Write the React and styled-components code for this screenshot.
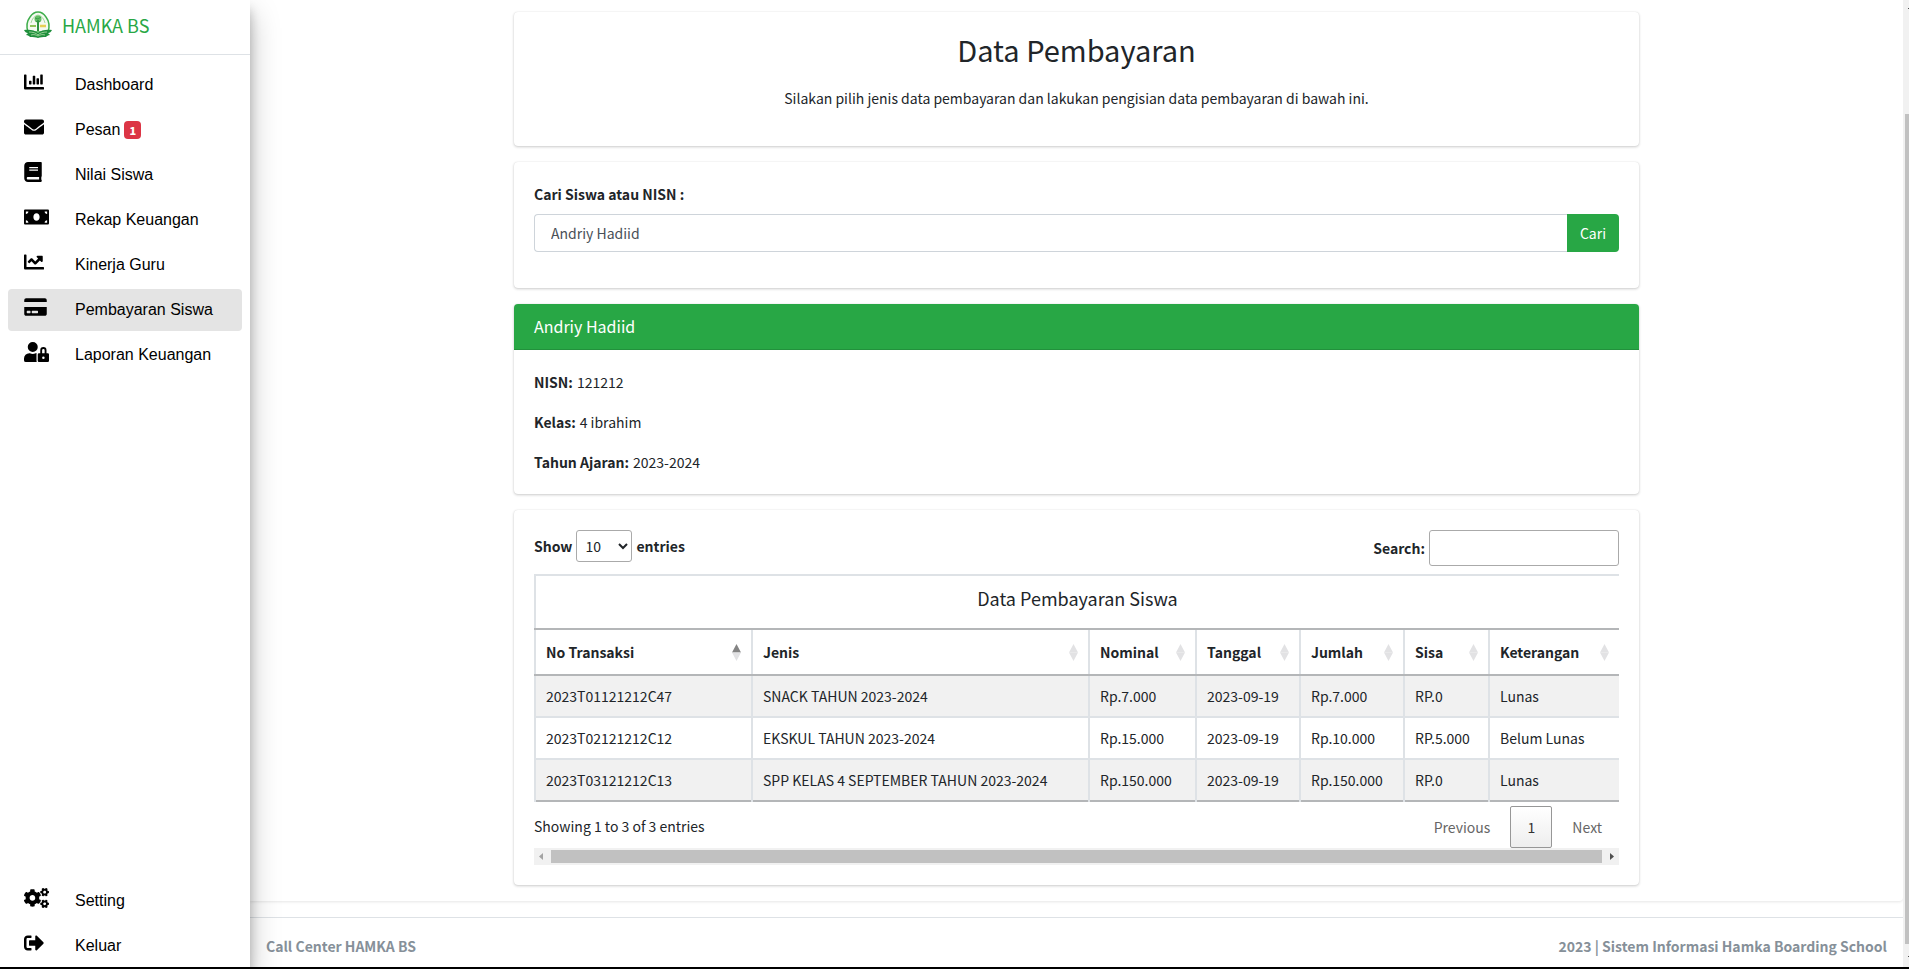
import styled, { createGlobalStyle } from "styled-components";
import {
  FaBook,
  FaChartBar,
  FaChartLine,
  FaCogs,
  FaCreditCard,
  FaEnvelope,
  FaMoneyBill,
  FaSignOutAlt,
  FaUserLock,
} from "react-icons/fa";

const GlobalStyle = createGlobalStyle`
  *,
  *::before,
  *::after {
    box-sizing: border-box;
  }

  :root {
    --font-ui: "Noto Sans CJK JP", "Noto Sans CJK SC", sans-serif;
    --color-green: #28a745;
    --color-text: #212529;
    --color-border: #dee2e6;
    --shadow-card: 0 0 1px rgba(0, 0, 0, 0.13), 0 1px 3px rgba(0, 0, 0, 0.2);
  }

  body {
    margin: 0;
    background-color: #fff;
    color: var(--color-text);
    font-family: var(--font-ui);
    font-size: 14px;
    line-height: 24px;
  }

  button,
  input,
  select {
    font: inherit;
    color: inherit;
  }
`;

const Frame = styled.div`
  display: flex;
  height: 100vh;
  padding: 0 6px 2px 0;
  background-color: #fff;
`;

const Window = styled.div`
  display: flex;
  flex: 1;
  min-width: 0;
  border-bottom: 2px solid #000;
`;

const Sidebar = styled.aside`
  position: relative;
  z-index: 1;
  display: flex;
  flex-direction: column;
  flex: 0 0 250px;
  background-color: #fff;
  box-shadow: 0 14px 28px rgba(0, 0, 0, 0.25), 0 10px 10px rgba(0, 0, 0, 0.22);
  clip-path: inset(0 -60px 0 0);
`;

const Brand = styled.a`
  display: flex;
  align-items: center;
  gap: 10px;
  height: 55px;
  padding: 0 24px 4px;
  border-bottom: 1px solid var(--color-border);
  color: var(--color-green);
  font-size: 18px;
  text-decoration: none;
`;

const NavList = styled.ul`
  display: flex;
  flex-direction: column;
  gap: 3px;
  margin: 0;
  padding: 9px 8px 0;
  list-style: none;
`;

const NavSpacer = styled.div`
  flex: 1;
`;

const NavLink = styled.a`
  display: flex;
  align-items: center;
  height: 42px;
  padding: 0 16px 1px;
  border-radius: 4px;
  background-color: ${(props) => (props.$active ? "#e4e4e4" : "transparent")};
  color: #000;
  font-family: "Liberation Sans", Arial, sans-serif;
  font-size: 16px;
  text-decoration: none;
`;

const NavIcon = styled.span`
  display: flex;
  width: 51px;
  padding-bottom: 6px;

  & svg {
    width: ${(props) => props.$width};
    height: 20px;
  }
`;

const Badge = styled.span`
  margin-left: 4px;
  padding: 0 5px;
  border-radius: 4px;
  background-color: #dc3545;
  color: #fff;
  font-family: var(--font-ui);
  font-size: 11px;
  font-weight: 900;
  line-height: 18px;
`;

const Page = styled.div`
  display: flex;
  flex-direction: column;
  flex: 1;
  min-width: 0;
`;

const Content = styled.main`
  flex: 1;
  padding: 12px 16px 16px;
  border-bottom-right-radius: 4px;
  box-shadow: 0 1px 3px rgba(0, 0, 0, 0.1);
`;

const Column = styled.div`
  display: flex;
  flex-direction: column;
  gap: 16px;
  max-width: 1125px;
  margin: 0 auto;
`;

const Card = styled.section`
  border-radius: 4px;
  background-color: #fff;
  box-shadow: var(--shadow-card);
`;

const CardBody = styled.div`
  padding: 20px;
`;

const IntroBody = styled(CardBody)`
  min-height: 134px;
  text-align: center;
`;

const PageTitle = styled.h2`
  margin: 0 0 20px;
  font-size: 29px;
  font-weight: 400;
  line-height: 34px;
`;

const Text = styled.p`
  margin: 0;
`;

const SearchForm = styled.form`
  padding-bottom: 16px;
`;

const SearchLabel = styled.label`
  display: block;
  margin-bottom: 8px;
  font-weight: 700;
`;

const InputGroup = styled.div`
  display: flex;
`;

const SearchInput = styled.input`
  flex: 1;
  height: 38px;
  padding: 6px 16px;
  border: 1px solid #ced4da;
  border-right: none;
  border-radius: 4px 0 0 4px;
  color: #495057;
`;

const SearchButton = styled.button`
  height: 38px;
  padding: 6px 13px;
  border: none;
  border-radius: 0 4px 4px 0;
  background-color: var(--color-green);
  color: #fff;
`;

const CardHeader = styled.h3`
  margin: 0;
  padding: 10px 20px 11px;
  border-bottom: 1px solid rgba(0, 0, 0, 0.13);
  border-radius: 4px 4px 0 0;
  background-color: var(--color-green);
  color: #fff;
  font-size: 16px;
  font-weight: 400;
`;

const Details = styled.dl`
  display: flex;
  flex-direction: column;
  gap: 16px;
  margin: 0;
`;

const DetailRow = styled.div`
  display: flex;
  gap: 4px;

  & dt {
    font-weight: 700;
  }

  & dd {
    margin: 0;
  }
`;

const TableTools = styled.div`
  display: flex;
  justify-content: space-between;
  padding-bottom: 8px;
`;

const ToolLabel = styled.label`
  display: flex;
  align-items: center;
  gap: 4px;
  height: 36px;
  font-weight: 700;
`;

const LengthLabel = styled(ToolLabel)`
  height: 32px;
`;

const LengthSelect = styled.select`
  width: 56px;
  height: 32px;
  padding: 4px;
  border: 1px solid #aaa;
  border-radius: 3px;
  background-color: transparent;
  font-weight: 400;
`;

const FilterInput = styled.input`
  width: 190px;
  height: 36px;
  padding: 5px;
  border: 1px solid #aaa;
  border-radius: 3px;
`;

const TableClip = styled.div`
  overflow: hidden;
`;

const DataTable = styled.table`
  width: calc(100% + 2px);
  border: 2px solid var(--color-border);
  border-bottom: 2px solid #b4b6b8;
  border-collapse: collapse;
  white-space: nowrap;
`;

const TableTitle = styled.th`
  height: 54px;
  padding: 0 0 8px;
  font-size: 18px;
  font-weight: 400;
`;

const HeadCell = styled.th`
  width: ${(props) => props.$width};
  height: 46px;
  padding: 0 10px;
  border-top: 2px solid #b4b6b8;
  border-bottom: 2px solid #b4b6b8;
  border-left: 2px solid var(--color-border);
  text-align: left;
`;

const HeadContent = styled.div`
  display: flex;
  align-items: center;
  justify-content: space-between;
`;

const BodyRow = styled.tr`
  height: 42px;

  &:nth-child(odd) {
    background-color: #f1f1f1;
  }
`;

const Cell = styled.td`
  padding: 0 10px;
  border-top: 2px solid var(--color-border);
  border-left: 2px solid var(--color-border);
`;

const TableFooter = styled.div`
  display: flex;
  align-items: flex-start;
  justify-content: space-between;
  padding-top: 4px;
`;

const Info = styled.p`
  margin: 0;
  padding-top: 8px;
`;

const Pagination = styled.nav`
  display: flex;
  gap: 3px;
`;

const PageButton = styled.button`
  min-width: 42px;
  height: 42px;
  padding: 0 16px;
  border: 1px solid ${(props) => (props.$current ? "#979797" : "transparent")};
  border-radius: 2px;
  background: ${(props) =>
    props.$current ? "linear-gradient(#fff, #eee)" : "transparent"};
  color: ${(props) => (props.$current ? "#333" : "#666")};
`;

const ScrollTrack = styled.div`
  display: flex;
  align-items: center;
  height: 17px;
  background-color: #f1f1f1;
`;

const ScrollArrow = styled.svg`
  flex: none;
  width: 17px;
  height: 17px;
`;

const ScrollThumb = styled.div`
  flex: 1;
  height: 13px;
  background-color: #c1c1c1;
`;

const Footer = styled.footer`
  display: flex;
  justify-content: space-between;
  margin-top: 16px;
  padding: 16px 16px 9px;
  border-top: 1px solid var(--color-border);
  color: #869099;
  font-weight: 700;
`;

const PageScroll = styled.div`
  display: flex;
  flex-direction: column;
  flex: 0 0 6px;
  padding-left: 2px;
  background-color: #f1f1f1;
`;

const PageScrollArrow = styled.svg`
  flex: none;
  width: 4px;
  height: 17px;
`;

const PageScrollThumb = styled.div`
  flex: 1;
  margin: 97px 0 6px;
  background-color: #c1c1c1;
`;

const menu = [
  { label: "Dashboard", icon: FaChartBar, width: "20px" },
  { label: "Pesan", icon: FaEnvelope, width: "20px", badge: 1 },
  { label: "Nilai Siswa", icon: FaBook, width: "18px" },
  { label: "Rekap Keuangan", icon: FaMoneyBill, width: "25px" },
  { label: "Kinerja Guru", icon: FaChartLine, width: "20px" },
  { label: "Pembayaran Siswa", icon: FaCreditCard, width: "23px", active: true },
  { label: "Laporan Keuangan", icon: FaUserLock, width: "25px" },
];

const bottomMenu = [
  { label: "Setting", icon: FaCogs, width: "25px" },
  { label: "Keluar", icon: FaSignOutAlt, width: "20px" },
];

const columns = [
  { label: "No Transaksi", width: "217px", sort: "asc" },
  { label: "Jenis" },
  { label: "Nominal", width: "107px" },
  { label: "Tanggal", width: "104px" },
  { label: "Jumlah", width: "104px" },
  { label: "Sisa", width: "85px" },
  { label: "Keterangan", width: "131px" },
];

const payments = [
  ["2023T01121212C47", "SNACK TAHUN 2023-2024", "Rp.7.000", "2023-09-19", "Rp.7.000", "RP.0", "Lunas"],
  ["2023T02121212C12", "EKSKUL TAHUN 2023-2024", "Rp.15.000", "2023-09-19", "Rp.10.000", "RP.5.000", "Belum Lunas"],
  ["2023T03121212C13", "SPP KELAS 4 SEPTEMBER TAHUN 2023-2024", "Rp.150.000", "2023-09-19", "Rp.150.000", "RP.0", "Lunas"],
];

function Logo() {
  return (
    <svg width="28" height="30" viewBox="0 0 28 30" aria-hidden="true">
      <path
        d="M4 22C2 16 3 11 6 7c2-3 5-5 8-5s6 2 8 5c3 4 4 9 2 15z"
        fill="#f4faf0"
        stroke="#3fae4c"
        strokeWidth="1.500"
      />
      <path d="M7 13c1-4 3-7 7-8M21 13c-1-4-3-7-7-8" fill="none" stroke="#a6d8a0" />
      <circle cx="14" cy="9" r="3.500" fill="#62bd63" />
      <path d="M11 8l3 1 3-2M12 12l2-2 2 2" fill="none" stroke="#2f9440" strokeWidth="0.800" />
      <path d="M14 11v10" stroke="#2f9440" strokeWidth="2" />
      <path d="M6 16h6" stroke="#8fc458" strokeWidth="2" />
      <path d="M16 16h6" stroke="#e6cf55" strokeWidth="2.500" />
      <path
        d="M0 20c5-1 11 0 14 3 3-3 9-4 14-3-1 2-2 3-4 3l2 2c-2 0-3 1-4 2-3 0-6 0-8 1-2-1-5-1-8-1-1-1-2-2-4-2l2-2c-2 0-3-1-4-3z"
        fill="#1f8f3c"
      />
      <path d="M5 22c4 0 7 1 9 3 2-2 5-3 9-3" fill="none" stroke="#b5dfa9" strokeWidth="0.800" />
      <path d="M7 25c3-1 5 0 7 1 2-1 4-2 7-1" fill="none" stroke="#b5dfa9" strokeWidth="0.800" />
    </svg>
  );
}

function SortIcon({ sort }) {
  return (
    <svg width="9" height="17" viewBox="0 0 9 17" aria-hidden="true">
      <path d="M4.500 0L9 8.500H0z" fill={sort === "asc" ? "#848484" : "#e2e2e4"} />
      <path d="M4.500 17L9 8.500H0z" fill="#e2e2e4" />
    </svg>
  );
}

function NavItem({ item }) {
  const Icon = item.icon;
  return (
    <li>
      <NavLink href="#" $active={item.active}>
        <NavIcon $width={item.width}>
          <Icon />
        </NavIcon>
        {item.label}
        {item.badge && <Badge>{item.badge}</Badge>}
      </NavLink>
    </li>
  );
}

function PaymentTable() {
  return (
    <TableClip>
      <DataTable>
        <thead>
          <tr>
            <TableTitle colSpan={7}>Data Pembayaran Siswa</TableTitle>
          </tr>
          <tr>
            {columns.map((column) => (
              <HeadCell key={column.label} $width={column.width}>
                <HeadContent>
                  {column.label}
                  <SortIcon sort={column.sort} />
                </HeadContent>
              </HeadCell>
            ))}
          </tr>
        </thead>
        <tbody>
          {payments.map((payment) => (
            <BodyRow key={payment[0]}>
              {payment.map((value, index) => (
                <Cell key={columns[index].label}>{value}</Cell>
              ))}
            </BodyRow>
          ))}
        </tbody>
      </DataTable>
    </TableClip>
  );
}

function App() {
  return (
    <Frame>
      <GlobalStyle />
      <Window>
        <Sidebar>
          <Brand href="#">
            <Logo />
            HAMKA BS
          </Brand>
          <NavList>
            {menu.map((item) => (
              <NavItem key={item.label} item={item} />
            ))}
          </NavList>
          <NavSpacer />
          <NavList>
            {bottomMenu.map((item) => (
              <NavItem key={item.label} item={item} />
            ))}
          </NavList>
        </Sidebar>
        <Page>
          <Content>
            <Column>
              <Card>
                <IntroBody>
                  <PageTitle>Data Pembayaran</PageTitle>
                  <Text>
                    Silakan pilih jenis data pembayaran dan lakukan pengisian data pembayaran di bawah ini.
                  </Text>
                </IntroBody>
              </Card>
              <Card>
                <CardBody>
                  <SearchForm>
                    <SearchLabel htmlFor="student">Cari Siswa atau NISN :</SearchLabel>
                    <InputGroup>
                      <SearchInput id="student" defaultValue="Andriy Hadiid" />
                      <SearchButton type="button">Cari</SearchButton>
                    </InputGroup>
                  </SearchForm>
                </CardBody>
              </Card>
              <Card>
                <CardHeader>Andriy Hadiid</CardHeader>
                <CardBody>
                  <Details>
                    <DetailRow>
                      <dt>NISN:</dt>
                      <dd>121212</dd>
                    </DetailRow>
                    <DetailRow>
                      <dt>Kelas:</dt>
                      <dd>4 ibrahim</dd>
                    </DetailRow>
                    <DetailRow>
                      <dt>Tahun Ajaran:</dt>
                      <dd>2023-2024</dd>
                    </DetailRow>
                  </Details>
                </CardBody>
              </Card>
              <Card>
                <CardBody>
                  <TableTools>
                    <LengthLabel>
                      Show
                      <LengthSelect defaultValue="10">
                        <option>10</option>
                        <option>25</option>
                        <option>50</option>
                        <option>100</option>
                      </LengthSelect>
                      entries
                    </LengthLabel>
                    <ToolLabel>
                      Search:
                      <FilterInput type="search" />
                    </ToolLabel>
                  </TableTools>
                  <PaymentTable />
                  <TableFooter>
                    <Info>Showing 1 to 3 of 3 entries</Info>
                    <Pagination>
                      <PageButton>Previous</PageButton>
                      <PageButton $current>1</PageButton>
                      <PageButton>Next</PageButton>
                    </Pagination>
                  </TableFooter>
                  <ScrollTrack>
                    <ScrollArrow viewBox="0 0 17 17">
                      <path d="M9 5v7L5 8.500z" fill="#a3a3a3" />
                    </ScrollArrow>
                    <ScrollThumb />
                    <ScrollArrow viewBox="0 0 17 17">
                      <path d="M8 5v7l4-3.500z" fill="#505050" />
                    </ScrollArrow>
                  </ScrollTrack>
                </CardBody>
              </Card>
            </Column>
          </Content>
          <Footer>
            <span>Call Center HAMKA BS</span>
            <span>2023 | Sistem Informasi Hamka Boarding School</span>
          </Footer>
        </Page>
        <PageScroll>
          <PageScrollArrow viewBox="0 0 4 17">
            <rect x="3" y="8" width="1" height="1" fill="#505050" />
          </PageScrollArrow>
          <PageScrollThumb />
          <PageScrollArrow viewBox="0 0 4 17">
            <rect x="3" y="6" width="1" height="1" fill="#505050" />
          </PageScrollArrow>
        </PageScroll>
      </Window>
    </Frame>
  );
}

export default App;
